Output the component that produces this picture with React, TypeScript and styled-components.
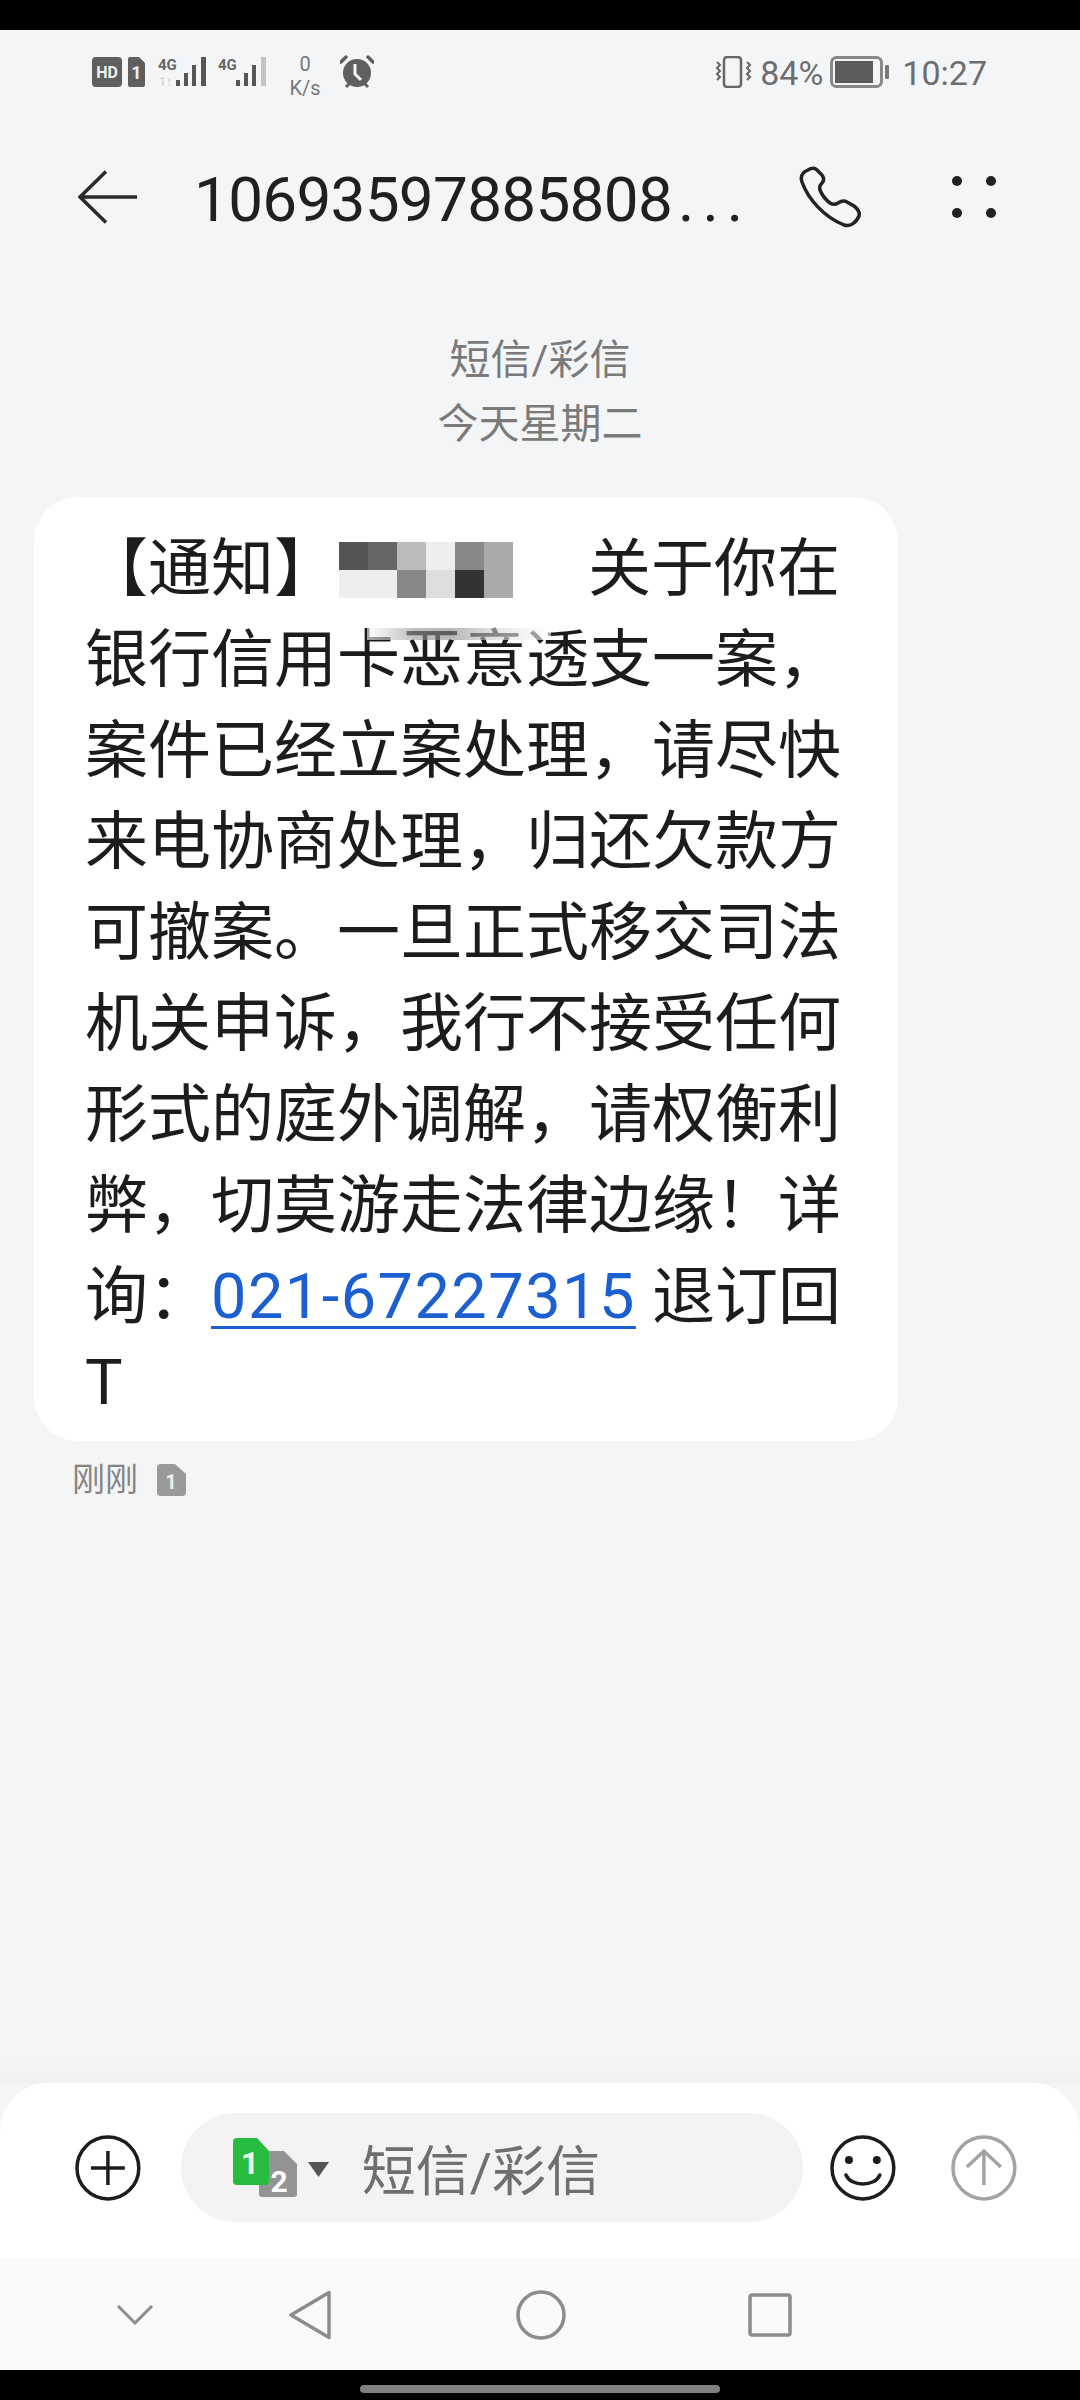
import React from 'react';
import styled, { createGlobalStyle } from 'styled-components';

const GlobalStyle = createGlobalStyle`
  html, body {
    margin: 0;
    padding: 0;
    background: #000;
  }
  * {
    box-sizing: border-box;
  }
`;

const Screen = styled.div`
  width: 1080px;
  height: 2400px;
  display: flex;
  flex-direction: column;
  background: #f4f5f7;
  color: #1c1c1c;
  font-family: Roboto, 'Noto Sans CJK SC', sans-serif;
  overflow: hidden;
`;

const TopInset = styled.div`
  height: 30px;
  flex: none;
  background: #000;
`;

const StatusBar = styled.div`
  height: 84px;
  flex: none;
  display: flex;
  align-items: center;
  justify-content: space-between;
  padding: 0 93px 0 92px;
  color: #6a6a6a;
`;

const StatusGroup = styled.div`
  display: flex;
  align-items: center;
`;

const StatusSpacer = styled.div<{ $small?: boolean }>`
  width: ${(p) => (p.$small ? 10 : 13)}px;
`;

const SpeedMeter = styled.div`
  width: 34px;
  margin: 8px 18px 0 20px;
  display: flex;
  flex-direction: column;
  align-items: center;
  font-size: 20px;
  line-height: 24px;
  color: #777;
`;

const StatusText = styled.span<{ $gap: number }>`
  font-size: 34px;
  line-height: 36px;
  margin: 2px 0 0 ${(p) => p.$gap}px;
  color: #6e6e6e;
`;

const BatteryIcon = styled.svg`
  margin-left: 7px;
`;

const Header = styled.header`
  height: 166px;
  flex: none;
  display: flex;
  align-items: center;
  padding-left: 78px;
`;

const Title = styled.h1`
  width: 605px;
  margin: 5px 0 0 57px;
  font-size: 62px;
  font-weight: 400;
  letter-spacing: -0.7px;
  line-height: 80px;
  color: #202020;
  white-space: nowrap;
`;

const TitleEllipsis = styled.span`
  margin-left: 6px;
  letter-spacing: 8px;
`;

const HeaderDots = styled.div`
  width: 44px;
  height: 42px;
  margin-left: 91px;
  display: grid;
  grid-template-columns: 10px 10px;
  justify-content: space-between;
  align-content: space-between;
`;

const Dot = styled.span`
  width: 10px;
  height: 10px;
  border-radius: 50%;
  background: #222;
`;

const ThreadMeta = styled.div`
  flex: none;
  padding-top: 48px;
  text-align: center;
  font-size: 41px;
  line-height: 64px;
  color: #7a7a7a;
`;

const Bubble = styled.div`
  position: relative;
  width: 864px;
  margin: 41px 0 0 34px;
  padding: 26px 0 18px 51px;
  flex: none;
  background: #fff;
  border-radius: 44px;
  font-size: 63px;
  line-height: 91px;
  color: #1c1c1c;
`;

const MessageLine = styled.div`
  height: 91px;
  white-space: nowrap;
`;

// the trailing "T" sits a little closer to the line above it
const LastLine = styled.div`
  height: 81px;
  line-height: 81px;
`;

const Mosaic = styled.span`
  display: inline-grid;
  grid-template-columns: repeat(6, 29px);
  grid-auto-rows: 28px;
  vertical-align: top;
  margin: 19px 75px 0 2px;
`;

const MosaicCell = styled.i<{ $tone: string }>`
  background: ${(p) => p.$tone};
`;

const Smudge = styled.div`
  position: absolute;
  left: 333px;
  top: 131px;
  width: 184px;
  height: 12px;
  background: linear-gradient(90deg, #fff 0%, #999 25%, #888 45%, #ddd 75%, #fff 100%);
  opacity: 0.6;
`;

const PhoneLink = styled.a`
  color: #1c5fd1;
  text-decoration: underline;
  text-decoration-thickness: 3px;
  text-underline-offset: 8px;
  letter-spacing: 1.5px;
  margin-right: 16px;
`;

const DeliveryRow = styled.div`
  flex: none;
  display: flex;
  align-items: center;
  gap: 19px;
  margin: 17px 0 0 72px;
  font-size: 33px;
  line-height: 44px;
  color: #858585;
`;

const Spacer = styled.div`
  flex: 1;
  background: linear-gradient(180deg, transparent 96%, #f2f2f2 100%);
`;

const Composer = styled.div`
  height: 175px;
  flex: none;
  display: flex;
  align-items: center;
  padding: 0 63px 6px 75px;
  background: #fff;
  border-radius: 48px 48px 0 0;
`;

const InputPill = styled.div`
  position: relative;
  width: 624px;
  height: 109px;
  margin: 0 27px 0 40px;
  padding-left: 181px;
  display: flex;
  align-items: center;
  border-radius: 55px;
  background: #f3f3f3;
  font-size: 54px;
  color: #6f6f6f;
`;

const SimPicker = styled.svg`
  position: absolute;
  left: 52px;
  top: 25px;
`;

const SendIcon = styled.svg`
  margin-left: 55px;
`;

const NavBar = styled.nav`
  height: 112px;
  flex: none;
  display: flex;
  align-items: center;
  background: #fafafa;
  padding-left: 117px;
  padding-top: 2px;
`;

const NavSlot = styled.div<{ $width: number }>`
  width: ${(p) => p.$width}px;
  flex: none;
  display: flex;
  align-items: center;
`;

const BottomInset = styled.div`
  height: 30px;
  flex: none;
  display: flex;
  justify-content: center;
  padding-top: 15px;
  background: #000;
`;

const HomeIndicator = styled.div`
  width: 360px;
  height: 8px;
  border-radius: 4px;
  background: #808080;
`;

const SignalIcon = ({ faded, sub }: { faded?: boolean; sub?: boolean }) => (
  <svg width="50" height="32" viewBox="0 0 50 32">
    <text x="0" y="14" fontFamily="Roboto" fontSize="15" fontWeight="700" fill="#666">
      4G
    </text>
    {sub && <text x="1" y="30" fontFamily="Roboto" fontSize="12" fill="#ccc">1↑</text>}
    <rect x="18" y="24" width="4" height="6" fill="#555" />
    <rect x="26" y="17" width="4" height="13" fill="#555" />
    <rect x="34" y="9" width="4" height="21" fill="#555" />
    <rect x="43" y="1" width="5" height="29" fill={faded ? '#c4c4c4' : '#555'} />
  </svg>
);

const App = () => {
  const mosaic = ['#555', '#666', '#bbb', '#eee', '#888', '#aaa', '#eee', '#eee', '#888', '#ddd', '#333', '#aaa'];

  return (
    <>
      <GlobalStyle />
      <Screen>
        <TopInset />
        <StatusBar>
          <StatusGroup>
            <svg width="53" height="30" viewBox="0 0 53 30">
              <rect width="30" height="30" rx="4" fill="#5f5f5f" />
              <text x="15" y="21" textAnchor="middle" fontFamily="Roboto" fontSize="16" fontWeight="700" fill="#eee">
                HD
              </text>
              <path d="M36 2a2 2 0 0 1 2-2h9l6 6v22a2 2 0 0 1-2 2H38a2 2 0 0 1-2-2z" fill="#5f5f5f" />
              <text x="44.500" y="22" textAnchor="middle" fontFamily="Roboto" fontSize="18" fontWeight="700" fill="#eee">
                1
              </text>
            </svg>
            <StatusSpacer />
            <SignalIcon sub />
            <StatusSpacer $small />
            <SignalIcon faded />
            <SpeedMeter>
              <span>0</span>
              <span>K/s</span>
            </SpeedMeter>
            <svg width="34" height="34" viewBox="0 0 34 34">
              <circle cx="17" cy="18" r="14" fill="#5f5f5f" />
              <path d="M15 9v10l6 6" fill="none" stroke="#f4f5f7" strokeWidth="3" />
              <path d="M1 7l5-5M33 7l-5-5" stroke="#5f5f5f" strokeWidth="3.500" strokeLinecap="round" />
              <path d="M6 32l3-3M28 32l-3-3" stroke="#5f5f5f" strokeWidth="3" />
            </svg>
          </StatusGroup>
          <StatusGroup>
            <svg width="38" height="32" viewBox="0 0 38 32">
              <rect x="10" y="1" width="17" height="30" rx="3" fill="none" stroke="#666" strokeWidth="2.500" />
              <path d="M3 6l3 3-3 3 3 3-3 3 3 3-3 3M33 6l3 3-3 3 3 3-3 3 3 3-3 3" fill="none" stroke="#666" strokeWidth="2" />
            </svg>
            <StatusText $gap={8}>84%</StatusText>
            <BatteryIcon width="60" height="32" viewBox="0 0 60 32">
              <rect x="1.500" y="1.500" width="50" height="29" rx="5" fill="none" stroke="#888" strokeWidth="3" />
              <rect x="5" y="5" width="38" height="22" fill="#5c5c5c" />
              <rect x="55" y="9" width="4" height="14" rx="1" fill="#777" />
            </BatteryIcon>
            <StatusText $gap={12}>10:27</StatusText>
          </StatusGroup>
        </StatusBar>

        <Header>
          <svg width="59" height="54" viewBox="0 0 59 54">
            <path d="M28 1.500L2 27l26 25.500M2 27h57" fill="none" stroke="#2a2a2a" strokeWidth="3.500" />
          </svg>
          <Title>
            10693597885808<TitleEllipsis>...</TitleEllipsis>
          </Title>
          <svg width="62" height="62" viewBox="-1 -1 62 62">
            <path
              d="M8 3C3 5 0 9 2 15c6 17 22 35 42 43 6 2 12-2 15-9 1-4-1-7-5-10l-7-4c-3-2-6-1-9 1-3 2-5 2-8 0-4-3-8-8-10-13-1-3 0-5 2-7 2-2 2-5 0-8l-5-5C14 0 11 1 8 3z"
              fill="none"
              stroke="#222"
              strokeWidth="3.500"
            />
          </svg>
          <HeaderDots>
            <Dot />
            <Dot />
            <Dot />
            <Dot />
          </HeaderDots>
        </Header>

        <ThreadMeta>
          <div>短信/彩信</div>
          <div>今天星期二</div>
        </ThreadMeta>

        <Bubble>
          <MessageLine>
            【通知】
            <Mosaic>
              {mosaic.map((tone, i) => (
                <MosaicCell key={i} $tone={tone} />
              ))}
            </Mosaic>
            关于你在
          </MessageLine>
          <MessageLine>银行信用卡恶意透支一案，</MessageLine>
          <MessageLine>案件已经立案处理，请尽快</MessageLine>
          <MessageLine>来电协商处理，归还欠款方</MessageLine>
          <MessageLine>可撤案。一旦正式移交司法</MessageLine>
          <MessageLine>机关申诉，我行不接受任何</MessageLine>
          <MessageLine>形式的庭外调解，请权衡利</MessageLine>
          <MessageLine>弊，切莫游走法律边缘！详</MessageLine>
          <MessageLine>
            询：<PhoneLink>021-67227315</PhoneLink>退订回
          </MessageLine>
          <LastLine>T</LastLine>
          <Smudge />
        </Bubble>

        <DeliveryRow>
          <span>刚刚</span>
          <svg width="29" height="32" viewBox="0 0 29 32">
            <path d="M0 4a4 4 0 0 1 4-4h14l11 10v18a4 4 0 0 1-4 4H4a4 4 0 0 1-4-4z" fill="#999" />
            <text x="14" y="25" textAnchor="middle" fontFamily="Roboto" fontSize="20" fontWeight="700" fill="#eee">
              1
            </text>
          </svg>
        </DeliveryRow>

        <Spacer />

        <Composer>
          <svg width="66" height="66" viewBox="0 0 66 66">
            <circle cx="33" cy="33" r="31" fill="none" stroke="#1d1d1d" strokeWidth="3.500" />
            <path d="M16 33h34M33 16v34" stroke="#1d1d1d" strokeWidth="3.500" />
          </svg>
          <InputPill>
            <SimPicker width="100" height="62" viewBox="0 0 100 62">
              <path d="M26 16a3 3 0 0 1 3-3h22l13 13v30a3 3 0 0 1-3 3H29a3 3 0 0 1-3-3z" fill="#949494" />
              <text x="46" y="54" textAnchor="middle" fontFamily="Roboto" fontSize="30" fontWeight="700" fill="#fff">
                2
              </text>
              <path d="M0 4a4 4 0 0 1 4-4h20l12 13v30a4 4 0 0 1-4 4H4a4 4 0 0 1-4-4z" fill="#27bb3f" />
              <text x="17" y="36" textAnchor="middle" fontFamily="Roboto" fontSize="32" fontWeight="700" fill="#e8fbe8">
                1
              </text>
              <path d="M75 24h21l-10.500 15z" fill="#555" />
            </SimPicker>
            短信/彩信
          </InputPill>
          <svg width="66" height="66" viewBox="0 0 66 66">
            <circle cx="33" cy="33" r="31" fill="none" stroke="#1d1d1d" strokeWidth="3.500" />
            <circle cx="19" cy="25" r="4" fill="#1d1d1d" />
            <circle cx="47" cy="25" r="4" fill="#1d1d1d" />
            <path d="M16 40c5 12 29 12 34 0" fill="none" stroke="#1d1d1d" strokeWidth="3.500" strokeLinecap="round" />
          </svg>
          <SendIcon width="66" height="66" viewBox="0 0 66 66">
            <circle cx="33" cy="33" r="31" fill="none" stroke="#a3a3a3" strokeWidth="3.500" />
            <path d="M33 50V17M16 32l17-16 17 16" fill="none" stroke="#a3a3a3" strokeWidth="3.500" />
          </SendIcon>
        </Composer>

        <NavBar>
          <NavSlot $width={171}>
            <svg width="36" height="20" viewBox="0 0 36 20">
              <path d="M1 1l17 17L35 1" fill="none" stroke="#8c8c8c" strokeWidth="3" />
            </svg>
          </NavSlot>
          <NavSlot $width={228}>
            <svg width="44" height="50" viewBox="0 0 44 50">
              <path d="M41 2.500v45L3 25z" fill="none" stroke="#8c8c8c" strokeWidth="3.500" strokeLinejoin="round" />
            </svg>
          </NavSlot>
          <NavSlot $width={232}>
            <svg width="50" height="50" viewBox="0 0 50 50">
              <circle cx="25" cy="25" r="23" fill="none" stroke="#8c8c8c" strokeWidth="3.500" />
            </svg>
          </NavSlot>
          <NavSlot $width={44}>
            <svg width="44" height="44" viewBox="0 0 44 44">
              <rect x="2" y="2" width="40" height="40" rx="2" fill="none" stroke="#8c8c8c" strokeWidth="3.500" />
            </svg>
          </NavSlot>
        </NavBar>

        <BottomInset>
          <HomeIndicator />
        </BottomInset>
      </Screen>
    </>
  );
};

export default App;
